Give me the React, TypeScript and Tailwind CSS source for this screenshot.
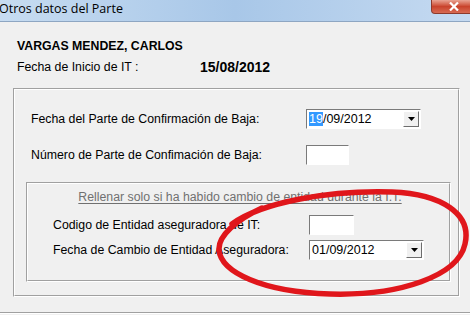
import React from 'react';

function DateCombo({ value, highlight }: { value: string; highlight?: boolean }) {
  return (
    <div className="flex h-[20px] w-[115px] items-center border border-t-[#7a7a7a] border-l-[#7a7a7a] border-r-white border-b-white bg-white">
      <div className="flex-1 pl-[2px] text-[12.5px] leading-none text-black">
        {highlight ? (
          <>
            <span className="bg-[#3399ff] text-white">{value.slice(0, 2)}</span>
            {value.slice(2)}
          </>
        ) : (
          value
        )}
      </div>
      <div className="mr-[1px] flex h-[16px] w-[16px] items-center justify-center border border-t-white border-l-white border-r-[#6d6d6d] border-b-[#6d6d6d] bg-[#f0f0f0]">
        <svg viewBox="0 0 7 4" className="h-[4px] w-[7px]">
          <path d="M0 0h7L3.5 4z" fill="#000" />
        </svg>
      </div>
    </div>
  );
}

function SmallBox({ w = 'w-[43px]' }: { w?: string }) {
  return (
    <div className={`h-[20px] ${w} border border-t-[#7a7a7a] border-l-[#7a7a7a] border-r-white border-b-white bg-white`} />
  );
}

export default function App() {
  return (
    <div
      className="relative h-[315px] w-[470px] overflow-hidden bg-[#f0f0f0] text-[12.3px] text-black"
      style={{ fontFamily: '"Liberation Sans", Arial, sans-serif' }}
    >
      {/* Title bar */}
      <div className="flex h-[22px] items-start justify-between border-b border-[#8ea6c2] bg-gradient-to-r from-[#c7dcf1] via-[#a8c7e8] to-[#c5daf1]">
        <span
          className="ml-[-1px] mt-[3px] text-[12.5px] leading-none text-black"
          style={{ fontFamily: '"Open Sans", "Noto Sans", sans-serif' }}
        >
          Otros datos del Parte
        </span>
        <div className="mr-[-6px] flex h-[14px] w-[45px] items-center justify-center rounded-bl-[4px] border border-t-0 border-[#8d3a2c] bg-gradient-to-b from-[#e8a393] via-[#c9432c] to-[#d76a52]">
          <svg viewBox="0 0 10 9" className="h-[9px] w-[10px]">
            <path d="M1 0.5l8 8M9 0.5l-8 8" stroke="#fff" strokeWidth="2.2" />
          </svg>
        </div>
      </div>

      {/* Header */}
      <div className="px-[17px] pt-[17px]">
        <div className="text-[12.3px] font-bold leading-[15px]">VARGAS MENDEZ, CARLOS</div>
        <div className="mt-[6px] flex items-center leading-[15px]">
          <span className="w-[183px]">Fecha de Inicio de IT :</span>
          <span className="text-[14px] font-bold">15/08/2012</span>
        </div>
      </div>

      {/* Outer group */}
      <div className="ml-[13px] mt-[13px] h-[209px] w-[447px] border border-t-[#a0a0a0] border-l-[#a0a0a0] border-r-white border-b-white">
        <div className="h-full border border-t-white border-l-white border-r-[#a0a0a0] border-b-[#a0a0a0] pl-[16px] pt-[19px]">
          <div className="flex items-center">
            <span className="w-[275px]">Fecha del Parte de Confirmación de Baja:</span>
            <DateCombo value="19/09/2012" highlight />
          </div>
          <div className="mt-[16px] flex items-center">
            <span className="w-[275px]">Número de Parte de Confimación de Baja:</span>
            <SmallBox />
          </div>

          {/* Inner group */}
          <div className="ml-[-5px] mt-[17px] h-[100px] w-[425px] border border-t-[#a0a0a0] border-l-[#a0a0a0] border-r-white border-b-white">
            <div className="h-full border border-t-white border-l-white border-r-[#a0a0a0] border-b-[#a0a0a0] pl-[25px] pt-[4px]">
              <div className="pr-[22px] text-center text-[#707070] underline underline-offset-2">
                Rellenar solo si ha habido cambio de entidad durante la I.T.
              </div>
              <div className="mt-[9px] flex items-center">
                <span className="w-[256px]">Codigo de Entidad aseguradora de IT:</span>
                <SmallBox w="w-[45px]" />
              </div>
              <div className="mt-[5px] flex items-center">
                <span className="w-[256px]">Fecha de Cambio de Entidad Aseguradora:</span>
                <DateCombo value="01/09/2012" />
              </div>
            </div>
          </div>
        </div>
      </div>

      {/* Bottom frame line */}
      <div className="absolute bottom-[1px] left-0 h-[2px] w-full border-t border-[#a0a0a0] bg-white" />

      {/* Hand-drawn annotation */}
      <svg className="pointer-events-none absolute left-0 top-0" width="470" height="315" viewBox="0 0 470 315">
        <path
          d="M232 224 C262 202 330 190 392 192 C442 194 472 214 465 244 C458 276 400 296 330 294 C262 292 221 272 219 250 C218 236 236 220 262 208"
          fill="none"
          stroke="#e0161b"
          strokeWidth="5.5"
          strokeLinecap="round"
        />
      </svg>
    </div>
  );
}
